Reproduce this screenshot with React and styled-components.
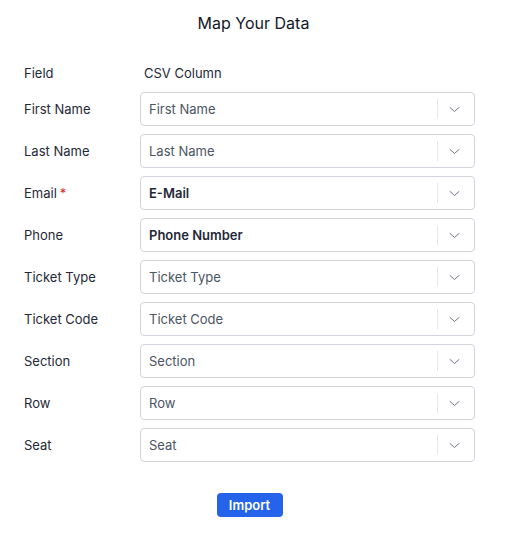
import React from "react";
import styled, { createGlobalStyle } from "styled-components";

const GlobalStyle = createGlobalStyle`
  body {
    margin: 0;
    padding: 0;
    background: #ffffff;
    font-family: Inter, "Noto Sans", sans-serif;
  }
`;

const Page = styled.main`
  width: 507px;
  padding: 13px 32px 0 24px;
  box-sizing: border-box;
`;

const Title = styled.h2`
  margin: 0;
  padding-left: 8px;
  text-align: center;
  font-size: 16px;
  line-height: 20px;
  font-weight: 400;
  color: #111827;
`;

const Grid = styled.div`
  display: grid;
  grid-template-columns: 116px 335px;
  row-gap: 8px;
  align-items: center;
  margin-top: 32px;
`;

const HeadCell = styled.div`
  font-size: 13px;
  line-height: 16px;
  font-weight: 400;
  color: #1f2937;
  margin-bottom: 3px;
  padding-left: ${(p) => (p.$indent ? "4px" : "0")};
`;

const Label = styled.div`
  font-size: 13px;
  color: #1f2937;
  font-weight: 400;
`;

const Required = styled.span`
  color: #dc2626;
  margin-left: 3px;
`;

const Select = styled.div`
  height: 34px;
  box-sizing: border-box;
  border: 1px solid #d1d5db;
  border-radius: 4px;
  display: flex;
  align-items: center;
  background: #fff;
`;

const Value = styled.div`
  flex: 1;
  padding-left: 8px;
  font-size: 13px;
  color: ${(p) => (p.$bold ? "#1f2937" : "#4b5563")};
  font-weight: ${(p) => (p.$bold ? 600 : 400)};
`;

const Separator = styled.span`
  width: 1px;
  height: 20px;
  background: #e5e7eb;
`;

const Indicator = styled.div`
  width: 36px;
  padding-right: 3px;
  box-sizing: border-box;
  display: flex;
  justify-content: center;
  align-items: center;
  color: #6b7280;
`;

const Footer = styled.div`
  display: flex;
  justify-content: center;
  margin-top: 31px;
`;

const ImportButton = styled.button`
  background: #2563eb;
  color: #fff;
  border: none;
  border-radius: 4px;
  font-family: Inter, "Noto Sans", sans-serif;
  font-size: 13px;
  font-weight: 600;
  width: 66px;
  height: 24px;
  padding: 0;
  cursor: pointer;
`;

const Chevron = () => (
  <svg width="11" height="7" viewBox="0 0 11 7" fill="none" stroke="currentColor" strokeWidth="1" strokeLinecap="round" strokeLinejoin="round">
    <path d="M1 1.5l4.5 4 4.5-4" />
  </svg>
);

const rows = [
  { field: "First Name", value: "First Name" },
  { field: "Last Name", value: "Last Name" },
  { field: "Email", value: "E-Mail", required: true, bold: true },
  { field: "Phone", value: "Phone Number", bold: true },
  { field: "Ticket Type", value: "Ticket Type" },
  { field: "Ticket Code", value: "Ticket Code" },
  { field: "Section", value: "Section" },
  { field: "Row", value: "Row" },
  { field: "Seat", value: "Seat" },
];

export default function App() {
  return (
    <Page>
      <GlobalStyle />
      <Title>Map Your Data</Title>
      <Grid>
        <HeadCell>Field</HeadCell>
        <HeadCell $indent>CSV Column</HeadCell>
        {rows.map((r) => (
          <React.Fragment key={r.field}>
            <Label>
              {r.field}
              {r.required && <Required>*</Required>}
            </Label>
            <Select>
              <Value $bold={r.bold}>{r.value}</Value>
              <Separator />
              <Indicator>
                <Chevron />
              </Indicator>
            </Select>
          </React.Fragment>
        ))}
      </Grid>
      <Footer>
        <ImportButton>Import</ImportButton>
      </Footer>
    </Page>
  );
}
